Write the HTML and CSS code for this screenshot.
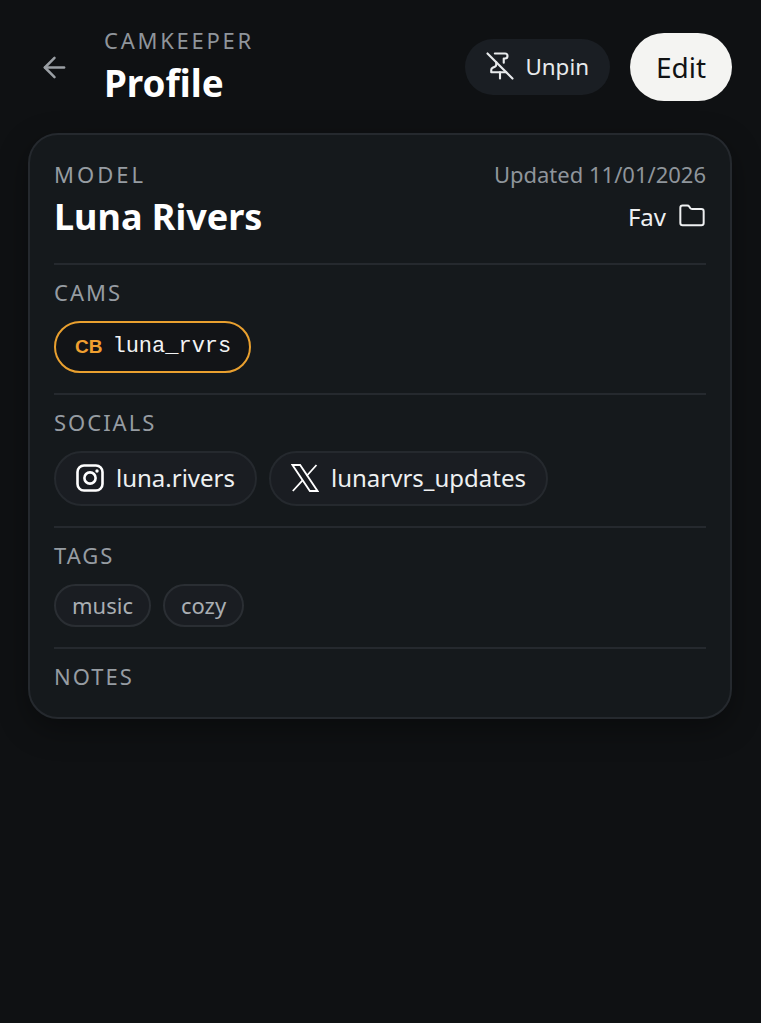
FILE: index.html
```html
<!DOCTYPE html>
<html lang="en">
<head>
  <meta charset="UTF-8">
  <meta name="viewport" content="width=device-width, initial-scale=1.0">
  <title>Camkeeper Profile</title>
  <link rel="stylesheet" href="styles.css">
</head>
<body>
  <!-- Header -->
  <header class="top-bar">
    <button class="back-button" aria-label="Back">
      <svg class="icon" viewBox="0 0 24 24"><path d="m12 19-7-7 7-7"/><path d="M19 12H5"/></svg>
    </button>
    <div class="heading">
      <p class="app-name">CAMKEEPER</p>
      <h1 class="page-title">Profile</h1>
    </div>
    <div class="actions">
      <button class="unpin-button">
        <svg class="icon" viewBox="0 0 24 24"><path d="M12 17v5"/><path d="M15 9.34V6h1a2 2 0 0 0 0-4H7.89"/><path d="m2 2 20 20"/><path d="M9 9v1.76a2 2 0 0 1-1.11 1.79l-1.78.9A2 2 0 0 0 5 15.24V17h12"/></svg>
        Unpin
      </button>
      <button class="edit-button">Edit</button>
    </div>
  </header>

  <!-- Profile card -->
  <main class="card">
    <section class="card-head">
      <div>
        <p class="label label-model">MODEL</p>
        <h2 class="model-name">Luna Rivers</h2>
      </div>
      <div class="card-meta">
        <p class="updated">Updated 11/01/2026</p>
        <p class="fav">Fav
          <svg class="icon" viewBox="0 0 24 24"><path d="M20 20a2 2 0 0 0 2-2V8a2 2 0 0 0-2-2h-7.9a2 2 0 0 1-1.69-.9L9.6 3.9A2 2 0 0 0 7.93 3H4a2 2 0 0 0-2 2v13a2 2 0 0 0 2 2Z"/></svg>
        </p>
      </div>
    </section>

    <section class="section">
      <p class="label">CAMS</p>
      <div class="chips">
        <a class="cam-chip"><span class="cam-site">CB</span><span class="cam-user">luna_rvrs</span></a>
      </div>
    </section>

    <section class="section">
      <p class="label">SOCIALS</p>
      <div class="chips">
        <a class="social-chip">
          <svg class="social-icon" viewBox="0 0 28 28"><rect class="ig-line" x="1.5" y="1.5" width="25" height="25" rx="6.5"/><circle class="ig-line" cx="14" cy="14" r="5.6"/><circle class="ig-dot" cx="21" cy="7" r="1.7"/></svg>
          luna.rivers
        </a>
        <a class="social-chip">
          <svg class="social-icon" viewBox="0 0 28 28"><path class="x-logo" d="M1.5 1h7.6l17.4 26h-7.6z"/><path class="x-logo" d="M25.5 1 15.6 12M11.8 16.2 1.8 27"/></svg>
          lunarvrs_updates
        </a>
      </div>
    </section>

    <section class="section">
      <p class="label">TAGS</p>
      <div class="chips">
        <span class="tag">music</span>
        <span class="tag">cozy</span>
      </div>
    </section>

    <section class="section section-last">
      <p class="label">NOTES</p>
    </section>
  </main>
</body>
</html>
```

FILE: styles.css
```css
* {
  box-sizing: border-box;
  margin: 0;
  padding: 0;
}
body {
  font-family: "Noto Sans", sans-serif;
  background-color: #0f1113;
  color: #fff;
  height: 1023px;
  overflow: hidden;
  padding: 0 29px 0 28px;
}
button {
  font-family: inherit;
  border: none;
  cursor: pointer;
}
.icon {
  width: 24px;
  height: 24px;
  fill: none;
  stroke: currentColor;
  stroke-width: 2;
  stroke-linecap: round;
  stroke-linejoin: round;
  flex-shrink: 0;
}

/* Header */
.top-bar {
  display: flex;
  align-items: center;
  height: 133px;
  padding-top: 1px;
}
.back-button {
  width: 52px;
  height: 48px;
  display: flex;
  align-items: center;
  justify-content: center;
  background: none;
  color: #9a9fa4;
}
.back-button .icon {
  width: 33px;
  height: 33px;
  stroke-width: 1.8;
}
.heading {
  margin-left: 24px;
}
.app-name {
  font-size: 22px;
  line-height: 30px;
  letter-spacing: 2.75px;
  margin-bottom: 2px;
  color: #8f959b;
}
.page-title {
  font-size: 36.8px;
  line-height: 52px;
  font-weight: 700;
  color: #fff;
}
.actions {
  display: flex;
  align-items: center;
  gap: 20px;
  margin-left: auto;
}
.unpin-button {
  display: flex;
  align-items: center;
  gap: 10px;
  height: 56px;
  padding: 0 21px 2px 20px;
  border-radius: 28px;
  background-color: #1a1e23;
  color: #e8eaec;
  font-size: 22.4px;
}
.unpin-button .icon {
  width: 30px;
  height: 30px;
  stroke-width: 1.7;
}
.edit-button {
  width: 102px;
  height: 68px;
  border-radius: 34px;
  background-color: #f4f4f2;
  color: #101214;
  font-size: 28px;
}

/* Card */
.card {
  height: 586px;
  background-color: #15191c;
  border: 2px solid #25292e;
  border-radius: 30px;
  padding: 24px 24px 0;
  box-shadow: 0 10px 30px rgba(0, 0, 0, 0.35);
}
.card-head {
  display: flex;
  justify-content: space-between;
  height: 104px;
}
.label {
  font-size: 22px;
  line-height: 30px;
  letter-spacing: 2px;
  color: #969ca2;
}
.label-model {
  letter-spacing: 3px;
}
.model-name {
  margin-top: 2px;
  font-size: 36px;
  line-height: 52px;
  font-weight: 700;
}
.card-meta {
  text-align: right;
}
.updated {
  font-size: 22px;
  line-height: 30px;
  color: #8f959b;
}
.fav {
  display: flex;
  justify-content: flex-end;
  align-items: center;
  gap: 12px;
  height: 52px;
  margin-top: 1px;
  font-size: 24px;
  color: #eef0f1;
}
.fav .icon {
  width: 28px;
  height: 28px;
  stroke-width: 1.7;
}
.section {
  border-top: 2px solid #25292e;
  padding: 12px 0 20px;
}
.section-last {
  padding-bottom: 0;
}
.chips {
  display: flex;
  gap: 12px;
  margin-top: 14px;
}

/* Chips */
.cam-chip {
  display: flex;
  align-items: center;
  gap: 10px;
  height: 52px;
  padding: 0 18px 0 19px;
  border: 2px solid #e9a02f;
  border-radius: 26px;
  background-color: #121417;
}
.cam-site {
  font-family: "Liberation Sans", sans-serif;
  font-size: 19px;
  font-weight: 700;
  color: #f0a030;
}
.cam-user {
  padding-bottom: 2px;
  font-family: "Liberation Mono", monospace;
  font-size: 22px;
  color: #f2f3f4;
}
.social-chip {
  display: flex;
  align-items: center;
  gap: 12px;
  height: 55px;
  padding: 0 20px 2px;
  border: 2px solid #25292e;
  border-radius: 28px;
  background-color: #1a1d22;
  font-size: 24px;
  color: #eef0f1;
}
.social-icon {
  width: 28px;
  height: 28px;
  flex-shrink: 0;
}
.ig-line {
  fill: none;
  stroke: #fff;
  stroke-width: 2.6;
}
.ig-dot {
  fill: #fff;
}
.x-logo {
  fill: none;
  stroke: #fff;
  stroke-width: 1.8;
}
.tag {
  display: flex;
  align-items: center;
  height: 43px;
  padding: 0 16px 2px;
  border: 2px solid #2a2e33;
  border-radius: 22px;
  background-color: #1a1d22;
  font-size: 22px;
  color: #a9aeb3;
}
```
